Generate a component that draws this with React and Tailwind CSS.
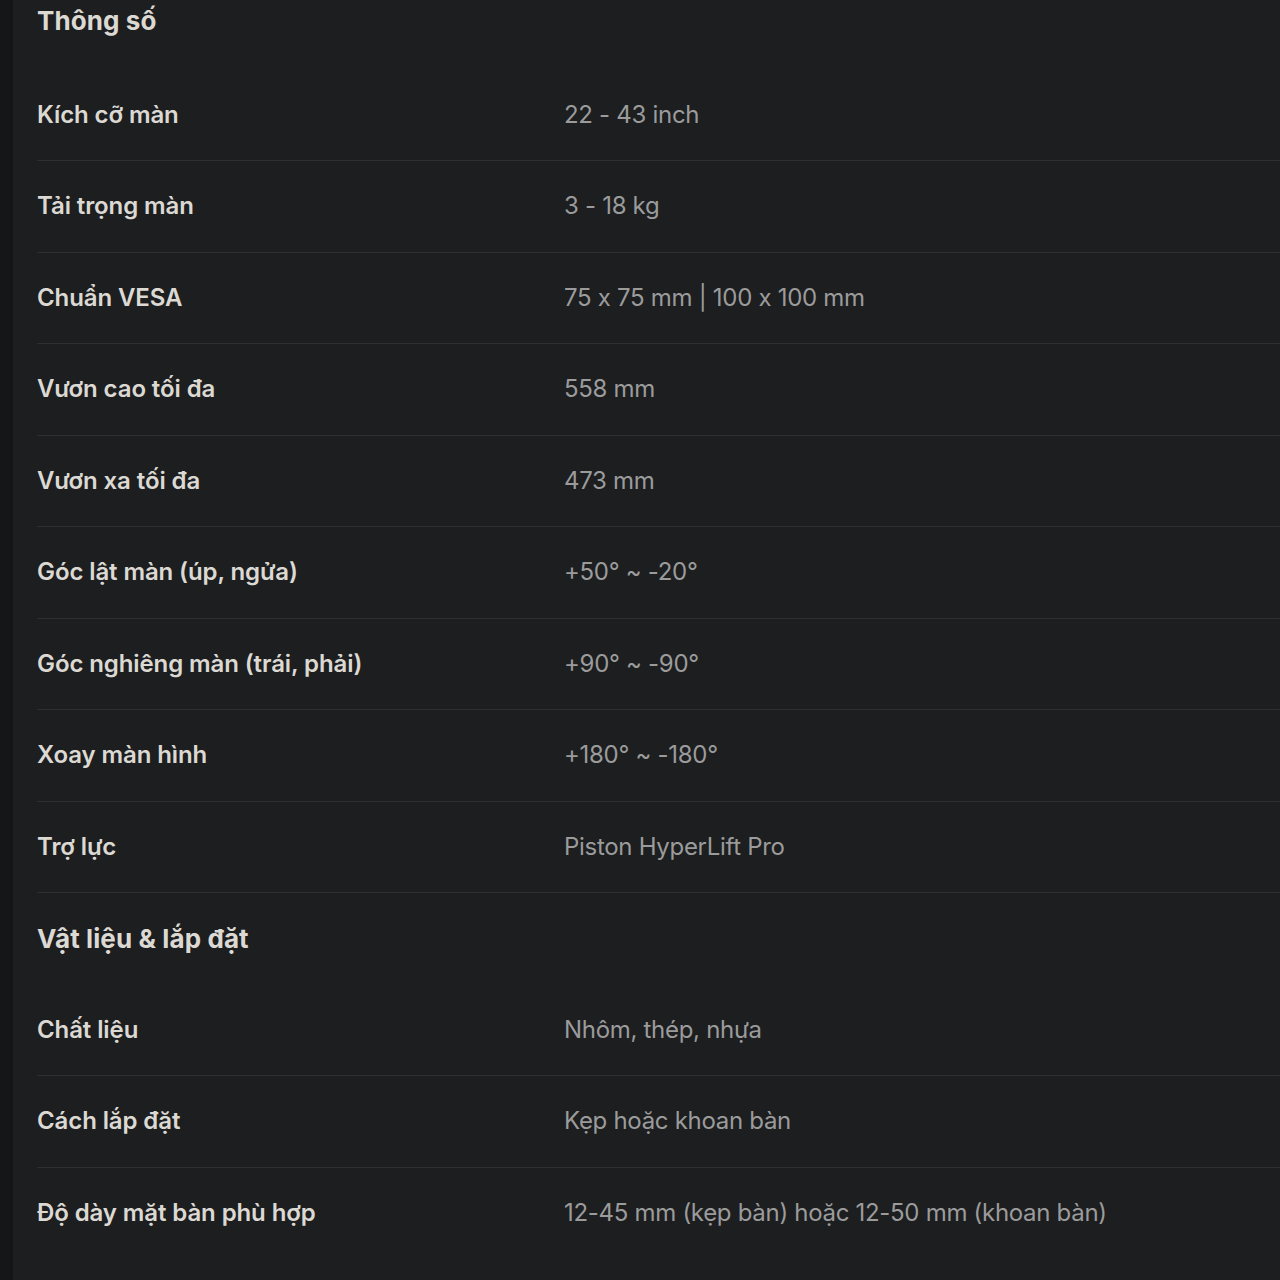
import React from "react";

const sec1 = [
  ["Kích cỡ màn", "22 - 43 inch"],
  ["Tải trọng màn", "3 - 18 kg"],
  ["Chuẩn VESA", "75 x 75 mm | 100 x 100 mm"],
  ["Vươn cao tối đa", "558 mm"],
  ["Vươn xa tối đa", "473 mm"],
  ["Góc lật màn (úp, ngửa)", "+50° ~ -20°"],
  ["Góc nghiêng màn (trái, phải)", "+90° ~ -90°"],
  ["Xoay màn hình", "+180° ~ -180°"],
  ["Trợ lực", "Piston HyperLift Pro"],
];
const sec2 = [
  ["Chất liệu", "Nhôm, thép, nhựa"],
  ["Cách lắp đặt", "Kẹp hoặc khoan bàn"],
  ["Độ dày mặt bàn phù hợp", "12-45 mm (kẹp bàn) hoặc 12-50 mm (khoan bàn)"],
];

function Row({ label, value, border }) {
  return (
    <div
      className={
        "flex items-center h-[91.5px] " +
        (border ? "border-b border-[#2d3033]" : "")
      }
    >
      <div className="w-[527px] shrink-0 text-[24px] font-semibold text-[#dcd9d3] tracking-[-0.1px]">
        {label}
      </div>
      <div className="text-[24px] text-[#9b9b9b] tracking-[-0.3px] whitespace-nowrap">{value}</div>
    </div>
  );
}

function Heading({ children, first }) {
  return (
    <div
      className={
        "flex items-center " +
        (first ? "-mt-[29px] h-[98.5px]" : "h-[91.5px]")
      }
    >
      <div className="text-[26px] font-bold text-[#dcd9d3] tracking-[0.1px]">{children}</div>
    </div>
  );
}

export default function App() {
  return (
    <div
      className="w-[1280px] h-[1280px] overflow-hidden bg-[#16181a] flex"
      style={{ fontFamily: "Inter, 'Noto Sans', sans-serif" }}
    >
      <div className="w-[13px] shrink-0 bg-[#141617]" />
      <div className="flex-1 bg-[#1c1e20] pl-[24px] overflow-hidden">
        <Heading first>Thông số</Heading>
        {sec1.map(([l, v]) => (
          <Row key={l} label={l} value={v} border />
        ))}
        <Heading>Vật liệu &amp; lắp đặt</Heading>
        {sec2.map(([l, v], i) => (
          <Row key={l} label={l} value={v} border={i < sec2.length - 1} />
        ))}
      </div>
    </div>
  );
}
